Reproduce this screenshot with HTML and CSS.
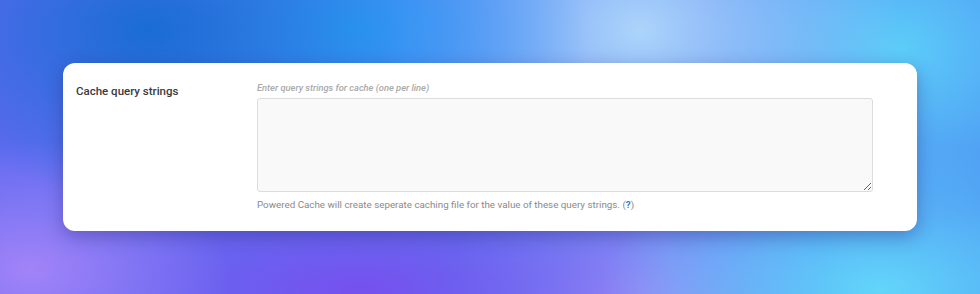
FILE: index.html
```html
<!DOCTYPE html>
<html lang="en">

<head>
    <meta charset="UTF-8">
    <title>Cache query strings</title>
    <link rel="stylesheet" href="styles.css">
</head>

<body>
    <main class="card">
        <div class="field-row">
            <label class="field-label" for="cache-query-strings">Cache query strings</label>
            <div class="field-control">
                <p class="field-hint">Enter query strings for cache (one per line)</p>
                <textarea id="cache-query-strings" class="field-input" name="cache_query_strings"></textarea>
                <p class="field-desc">Powered Cache will create seperate caching file for the value of these query strings. (<a href="#" class="help-link">?</a>)</p>
            </div>
        </div>
    </main>
</body>

</html>
```

FILE: styles.css
```css
html,
body {
    height: 100%;
    margin: 0;
    padding: 0;
}

body {
    box-sizing: border-box;
    padding: 63px 63px 0;
    font-family: Roboto, "Liberation Sans", Arial, sans-serif;
    background-color: #5a8cf0;
    background-image:
        radial-gradient(ellipse 260px 170px at 150px 30px, #1a6cd4 0%, rgba(26, 108, 212, 0) 100%),
        radial-gradient(ellipse 240px 150px at 350px 30px, #2c9bf4 0%, rgba(44, 155, 244, 0) 100%),
        radial-gradient(ellipse 260px 200px at 640px 30px, #acd4fb 0%, rgba(172, 212, 251, 0) 100%),
        radial-gradient(ellipse 200px 170px at 900px 50px, #5ccdf9 0%, rgba(92, 205, 249, 0) 100%),
        radial-gradient(ellipse 280px 150px at 880px 290px, #62d6fa 0%, rgba(98, 214, 250, 0) 100%),
        radial-gradient(ellipse 200px 130px at 30px 270px, #a283f8 0%, rgba(162, 131, 248, 0) 100%),
        radial-gradient(ellipse 320px 120px at 360px 290px, #7650ee 0%, rgba(118, 80, 238, 0) 100%),
        radial-gradient(ellipse 200px 140px at 640px 300px, #9a8cf6 0%, rgba(154, 140, 246, 0) 100%),
        linear-gradient(90deg, #5f6af0 0%, #5a7ff2 50%, #4c90f2 100%);
}

.card {
    background: #fff;
    border-radius: 12px;
    box-shadow: 0 6px 18px rgba(40, 30, 110, 0.35);
    padding: 19px 44px 19px 13px;
}

.field-row {
    display: grid;
    grid-template-columns: 181px 1fr;
}

.field-label {
    font-size: 11.5px;
    font-weight: 500;
    color: #3a3a3a;
    line-height: 16px;
    padding-top: 1px;
}

.field-control {
    display: flex;
    flex-direction: column;
}

.field-hint {
    margin: 0 0 4px;
    font-size: 9.3px;
    font-style: italic;
    font-weight: 500;
    color: #a9a9a9;
    line-height: 12px;
}

.field-input {
    box-sizing: border-box;
    height: 94px;
    width: 100%;
    margin: 0;
    background: #f9f9f9;
    border: 1px solid #dcdcdc;
    border-radius: 3px;
    resize: vertical;
}

.field-desc {
    margin: 6px 0 0;
    font-size: 9.8px;
    color: #8a8a8a;
    line-height: 14px;
}

.help-link {
    color: #1b87d6;
    text-decoration: none;
    font-weight: 700;
}
```
